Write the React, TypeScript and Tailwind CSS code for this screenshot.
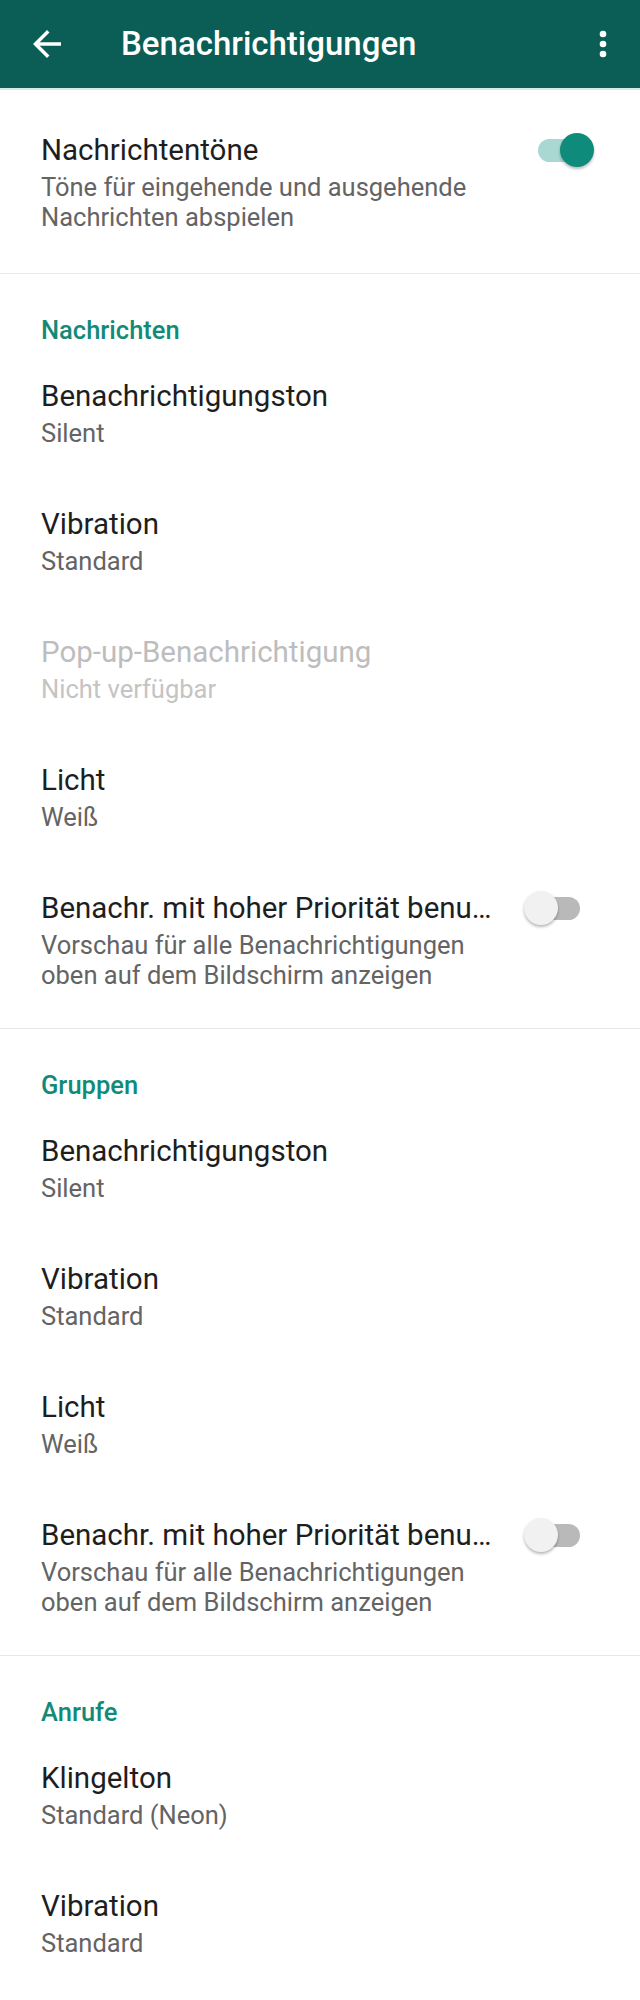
import React from "react";

const font = { fontFamily: "Roboto, 'Noto Sans', sans-serif" };

function Toggle({ on }: { on: boolean }) {
  if (on) {
    return (
      <div className="relative h-[34px] w-[56px] shrink-0">
        <div className="absolute left-0 top-[6px] h-[23px] w-[50px] rounded-full bg-[#a9d7d1]" />
        <div className="absolute right-0 top-0 h-[34px] w-[34px] rounded-full bg-[#0f8b7c] shadow-[0_2px_3px_rgba(0,0,0,0.28)]" />
      </div>
    );
  }
  return (
    <div className="relative h-[34px] w-[56px] shrink-0">
      <div className="absolute right-0 top-[6px] h-[23px] w-[50px] rounded-full bg-[#b9b9b9]" />
      <div className="absolute left-0 top-0 h-[34px] w-[34px] rounded-full bg-[#f1f1f1] shadow-[0_2px_3px_rgba(0,0,0,0.28)]" />
    </div>
  );
}

function SectionHeader({ children }: { children: React.ReactNode }) {
  return (
    <div className="pl-[41px] pt-[41px] pb-[2px]">
      <div className="text-[25.5px] leading-[30px] font-medium text-[#138a78]">{children}</div>
    </div>
  );
}

function Item({ title, sub, disabled }: { title: string; sub: string; disabled?: boolean }) {
  return (
    <div className="px-[41px] py-[27px]">
      <div className={`whitespace-nowrap text-[29.5px] leading-[44px] ${disabled ? "text-[#bdbdbd]" : "text-[#1e1e1e]"}`}>
        {title}
      </div>
      <div className={`whitespace-nowrap text-[25.5px] leading-[30px] ${disabled ? "text-[#c4c4c4]" : "text-[#646464]"}`}>
        {sub}
      </div>
    </div>
  );
}

function PriorityItem() {
  return (
    <div className="flex items-start pl-[41px] pr-[60px] py-[27px]">
      <div className="min-w-0 flex-1">
        <div className="whitespace-nowrap text-[29.5px] leading-[44px] text-[#1e1e1e]">
          Benachr. mit hoher Priorität benu…
        </div>
        <div className="whitespace-nowrap text-[25.5px] leading-[30px] text-[#646464]">
          Vorschau für alle Benachrichtigungen
        </div>
        <div className="whitespace-nowrap text-[25.5px] leading-[30px] text-[#646464]">
          oben auf dem Bildschirm anzeigen
        </div>
      </div>
      <div className="flex h-[44px] items-center">
        <Toggle on={false} />
      </div>
    </div>
  );
}

function Divider() {
  return <div className="h-px bg-[#e8e8e8]" />;
}

export default function App() {
  return (
    <div className="min-h-[2000px] w-[640px] bg-white" style={font}>
      {/* App bar */}
      <div className="flex h-[88px] items-center bg-[#0a5e55] pl-[26px] pr-[17px]">
        <svg width="42" height="42" viewBox="0 0 24 24" fill="#ffffff">
          <path d="M20 11H7.83l5.59-5.59L12 4l-8 8 8 8 1.41-1.41L7.83 13H20v-2z" />
        </svg>
        <div className="ml-[53px] flex-1 text-[33px] font-medium text-white">Benachrichtigungen</div>
        <svg width="40" height="40" viewBox="0 0 24 24" fill="#ffffff">
          <circle cx="12" cy="6" r="2" />
          <circle cx="12" cy="12" r="2" />
          <circle cx="12" cy="18" r="2" />
        </svg>
      </div>
      <div className="h-[2px] bg-[#d3ece8]" />

      {/* Nachrichtentöne */}
      <div className="flex items-start pl-[41px] pr-[46px] pt-[38px] pb-[41px]">
        <div className="min-w-0 flex-1">
          <div className="whitespace-nowrap text-[29.5px] leading-[44px] text-[#1e1e1e]">Nachrichtentöne</div>
          <div className="whitespace-nowrap text-[25.5px] leading-[30px] text-[#646464]">
            Töne für eingehende und ausgehende
          </div>
          <div className="whitespace-nowrap text-[25.5px] leading-[30px] text-[#646464]">Nachrichten abspielen</div>
        </div>
        <div className="flex h-[44px] items-center">
          <Toggle on={true} />
        </div>
      </div>
      <Divider />

      {/* Nachrichten */}
      <div className="pb-[11px]">
        <SectionHeader>Nachrichten</SectionHeader>
        <Item title="Benachrichtigungston" sub="Silent" />
        <Item title="Vibration" sub="Standard" />
        <Item title="Pop-up-Benachrichtigung" sub="Nicht verfügbar" disabled />
        <Item title="Licht" sub="Weiß" />
        <PriorityItem />
      </div>
      <Divider />

      {/* Gruppen */}
      <div className="pb-[11px]">
        <SectionHeader>Gruppen</SectionHeader>
        <Item title="Benachrichtigungston" sub="Silent" />
        <Item title="Vibration" sub="Standard" />
        <Item title="Licht" sub="Weiß" />
        <PriorityItem />
      </div>
      <Divider />

      {/* Anrufe */}
      <div>
        <SectionHeader>Anrufe</SectionHeader>
        <Item title="Klingelton" sub="Standard (Neon)" />
        <Item title="Vibration" sub="Standard" />
      </div>
    </div>
  );
}
